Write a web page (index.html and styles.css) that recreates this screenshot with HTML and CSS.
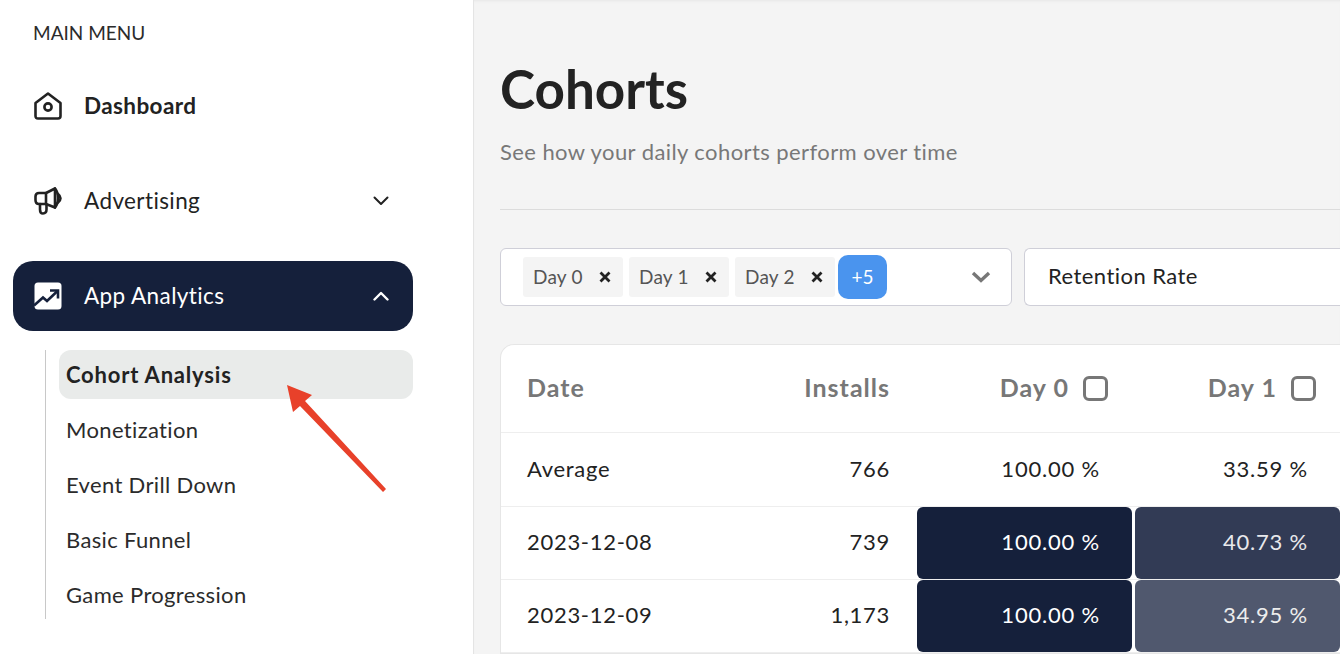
FILE: index.html
```html
<!DOCTYPE html>
<html lang="en">
<head>
  <meta charset="UTF-8" />
  <title>Cohorts</title>
  <link rel="stylesheet" href="styles.css">
</head>
<body>

  <aside class="sidebar">
    <div class="menu-title">MAIN MENU</div>

    <a class="nav-item nav-dashboard">
      <svg class="nav-icon" viewBox="0 0 28 28" fill="none" stroke="currentColor" stroke-width="2.6" stroke-linejoin="round">
        <path d="M1.500 11 L14 1.500 L26.500 11 V24 Q26.500 26.500 24 26.500 H4 Q1.500 26.500 1.500 24 Z" />
        <circle cx="14" cy="15" r="3.6" />
      </svg>
      <span>Dashboard</span>
    </a>

    <a class="nav-item nav-advertising">
      <svg class="nav-icon" viewBox="0 0 28 28" fill="none" stroke="currentColor" stroke-width="2.6" stroke-linejoin="round" stroke-linecap="round">
        <path d="M21 1.500 L12 6 H5 Q1.500 6 1.500 9.500 V13 Q1.500 17 5 17 H12 L21 20.500 Z" />
        <path d="M12 6 V17" />
        <path d="M21 1.500 Q24 5 24 11 Q24 17 21 20.500" />
        <path d="M24 7 Q29 11 24 15.500" />
        <path d="M6 17 V22.500 Q6 26.500 9 26.500 Q12.500 26.500 12.500 22.500 V18" />
      </svg>
      <span>Advertising</span>
      <svg class="nav-caret" viewBox="0 0 16 10" fill="none" stroke="currentColor" stroke-width="2" stroke-linecap="round" stroke-linejoin="round"><path d="M1.500 1.500 L8 8 L14.500 1.500" /></svg>
    </a>

    <a class="nav-item nav-active">
      <svg class="nav-icon" viewBox="0 0 28 28">
        <rect x="0.500" y="0.500" width="27" height="27" rx="3.500" fill="#fff" />
        <path d="M0 23.500 L9 15.500 L13 19 L23 9.500" fill="none" stroke="#15203b" stroke-width="2.600" />
        <path d="M16 8.500 H24 V16.500" fill="none" stroke="#15203b" stroke-width="2.600" />
      </svg>
      <span>App Analytics</span>
      <svg class="nav-caret" viewBox="0 0 16 10" fill="none" stroke="currentColor" stroke-width="2.400" stroke-linecap="round" stroke-linejoin="round"><path d="M1.500 8.500 L8 2 L14.500 8.500" /></svg>
    </a>

    <div class="submenu">
      <a class="sub-item sub-active">Cohort Analysis</a>
      <a class="sub-item">Monetization</a>
      <a class="sub-item">Event Drill Down</a>
      <a class="sub-item">Basic Funnel</a>
      <a class="sub-item">Game Progression</a>
    </div>
  </aside>

  <main class="content">
    <h1>Cohorts</h1>
    <p class="subtitle">See how your daily cohorts perform over time</p>
    <hr class="divider">

    <div class="filters">
      <div class="select select-days">
        <span class="chip">Day 0 <svg class="chip-x" viewBox="0 0 12 12"><path d="M1.500 1.500 L10.500 10.500 M10.500 1.500 L1.500 10.500" /></svg></span>
        <span class="chip">Day 1 <svg class="chip-x" viewBox="0 0 12 12"><path d="M1.500 1.500 L10.500 10.500 M10.500 1.500 L1.500 10.500" /></svg></span>
        <span class="chip">Day 2 <svg class="chip-x" viewBox="0 0 12 12"><path d="M1.500 1.500 L10.500 10.500 M10.500 1.500 L1.500 10.500" /></svg></span>
        <span class="more">+5</span>
        <svg class="select-caret" viewBox="0 0 20 12" fill="none" stroke="currentColor" stroke-width="3.400" stroke-linejoin="miter"><path d="M2 2 L10 9.500 L18 2" /></svg>
      </div>
      <div class="select select-metric">Retention Rate</div>
    </div>

    <div class="card">
      <div class="row row-head">
        <div class="cell-date">Date</div>
        <div class="cell-installs">Installs</div>
        <div class="cell-day cell-day-first">Day 0 <i class="check"></i></div>
        <div class="cell-day">Day 1 <i class="check"></i></div>
      </div>
      <div class="row row-avg">
        <div class="cell-date">Average</div>
        <div class="cell-installs">766</div>
        <div class="heat">100.00 %</div>
        <div class="heat">33.59 %</div>
      </div>
      <div class="row">
        <div class="cell-date">2023-12-08</div>
        <div class="cell-installs">739</div>
        <div class="heat heat-full">100.00 %</div>
        <div class="heat heat-mid">40.73 %</div>
      </div>
      <div class="row">
        <div class="cell-date">2023-12-09</div>
        <div class="cell-installs">1,173</div>
        <div class="heat heat-full">100.00 %</div>
        <div class="heat heat-low">34.95 %</div>
      </div>
    </div>
  </main>

  <svg class="arrow" viewBox="0 0 110 120" fill="#e8412a">
    <path d="M7 5 L32 15 L25 21 L106 109 L103 112 L20 26 L13 32 Z" />
  </svg>

</body>
</html>
```

FILE: styles.css
```css
* {
  box-sizing: border-box;
}

html, body {
  height: 100%;
}

body {
  margin: 0;
  display: flex;
  overflow: hidden;
  font-family: 'Lato', 'Open Sans', sans-serif;
  color: #222;
  background: #f4f4f4;
}

/* sidebar */
.sidebar {
  width: 474px;
  flex-shrink: 0;
  height: 100%;
  background: #fff;
  border-right: 1px solid #e4e4e4;
  padding: 21px 60px 0 13px;
}

.menu-title {
  padding-left: 20px;
  font-size: 19px;
  line-height: 23px;
  color: #2b2b2b;
}

.nav-item {
  display: flex;
  align-items: center;
  height: 70px;
  padding: 0 21px;
  border-radius: 20px;
  font-size: 22.500px;
  letter-spacing: 0.4px;
}

.nav-item span {
  padding-bottom: 2px;
}

.nav-dashboard {
  margin-top: 27px;
  font-weight: 700;
}

.nav-advertising {
  margin-top: 25px;
}

.nav-active {
  margin-top: 25px;
  background: #15203b;
  color: #fff;
}

.nav-icon {
  width: 28px;
  height: 28px;
  margin-right: 22px;
  flex-shrink: 0;
}

.nav-caret {
  width: 16px;
  height: 10px;
  margin-left: auto;
  margin-right: 3px;
}

.submenu {
  margin: 19px 0 0 32px;
  border-left: 1px solid #c8c8c8;
  padding-left: 13px;
  height: 269px;
}

.sub-item {
  display: flex;
  align-items: center;
  height: 49px;
  margin-bottom: 6px;
  padding: 0 0 1px 7px;
  border-radius: 12px;
  font-size: 22px;
  letter-spacing: 0.35px;
  color: #2b2b2b;
}

.sub-active {
  background: #e9ebea;
  font-weight: 700;
  letter-spacing: 0.8px;
  color: #222;
}

/* main area */
.content {
  flex: 1;
  min-width: 0;
  padding: 0 0 0 26px;
  box-shadow: inset 0 3px 3px -2px #e6e6e6;
}

h1 {
  margin: 57px 0 0;
  font-size: 53px;
  line-height: 64px;
  font-weight: 700;
  color: #222;
}

.subtitle {
  margin: 16px 0 0;
  font-size: 22px;
  line-height: 30px;
  letter-spacing: 0.42px;
  color: #787878;
}

.divider {
  margin: 42px 0 0;
  border: none;
  border-top: 1px solid #dcdcdc;
}

.filters {
  display: flex;
  gap: 12px;
  margin-top: 38px;
}

.select {
  display: flex;
  align-items: center;
  height: 58px;
  background: #fff;
  border: 1px solid #cfcfd8;
  border-radius: 6px;
}

.select-days {
  width: 512px;
  flex-shrink: 0;
  padding-left: 22px;
  gap: 6px;
}

.select-metric {
  flex: 1;
  padding: 0 0 3px 23px;
  border-right: none;
  border-radius: 6px 0 0 6px;
  font-size: 22px;
  letter-spacing: 0.45px;
}

.chip {
  display: flex;
  align-items: center;
  justify-content: space-between;
  width: 100px;
  height: 40px;
  padding: 0 12px 1px 10px;
  background: #f4f4f4;
  border-radius: 3px;
  font-size: 19px;
  letter-spacing: 0.2px;
  color: #555;
}

.chip-x {
  width: 12px;
  height: 12px;
  fill: none;
  stroke: #222;
  stroke-width: 2.800;
}

.more {
  display: flex;
  align-items: center;
  justify-content: center;
  width: 49px;
  height: 44px;
  margin-left: -3px;
  padding-bottom: 2px;
  background: #4a94ee;
  border-radius: 10px;
  font-size: 19px;
  color: #fff;
}

.select-caret {
  width: 20px;
  height: 12px;
  margin-left: auto;
  margin-right: 20px;
  color: #777;
}

/* table */
.card {
  margin-top: 38px;
  background: #fff;
  border: 1px solid #e6e6e6;
  border-right: none;
  border-radius: 14px 0 0 0;
  overflow: hidden;
}

.row {
  display: grid;
  grid-template-columns: 200px 216px 218px 205px;
  height: 73px;
  border-bottom: 1px solid #eee;
  font-size: 22px;
  letter-spacing: 0.7px;
}

.row-head {
  height: 88px;
  font-weight: 700;
  font-size: 25px;
  letter-spacing: 1px;
  color: #777;
}

.row-avg {
  height: 74px;
}

.cell-date {
  display: flex;
  align-items: center;
  padding: 0 0 3px 26px;
}

.cell-installs {
  display: flex;
  align-items: center;
  justify-content: flex-end;
  padding: 0 27px 3px 0;
}

.cell-day {
  display: flex;
  align-items: center;
  justify-content: flex-end;
  gap: 14px;
  padding: 0 24px 3px 0;
}

.cell-day-first {
  padding-right: 27px;
}

.check {
  width: 25px;
  height: 25px;
  margin-top: 3px;
  border: 3px solid #777;
  border-radius: 6px;
}

.heat {
  display: flex;
  align-items: center;
  justify-content: flex-end;
  padding: 0 32px 3px 0;
  border-radius: 6px;
  letter-spacing: 0.8px;
}

.heat:nth-child(3) {
  margin-right: 3px;
}

.heat-full {
  background: #15203b;
  color: #fff;
}

.heat-mid {
  background: #323b55;
  color: #e8e9ec;
}

.heat-low {
  background: #50586e;
  color: #eceded;
}

/* annotation over the menu */
.arrow {
  position: absolute;
  left: 280px;
  top: 380px;
  width: 110px;
  height: 120px;
}
```
